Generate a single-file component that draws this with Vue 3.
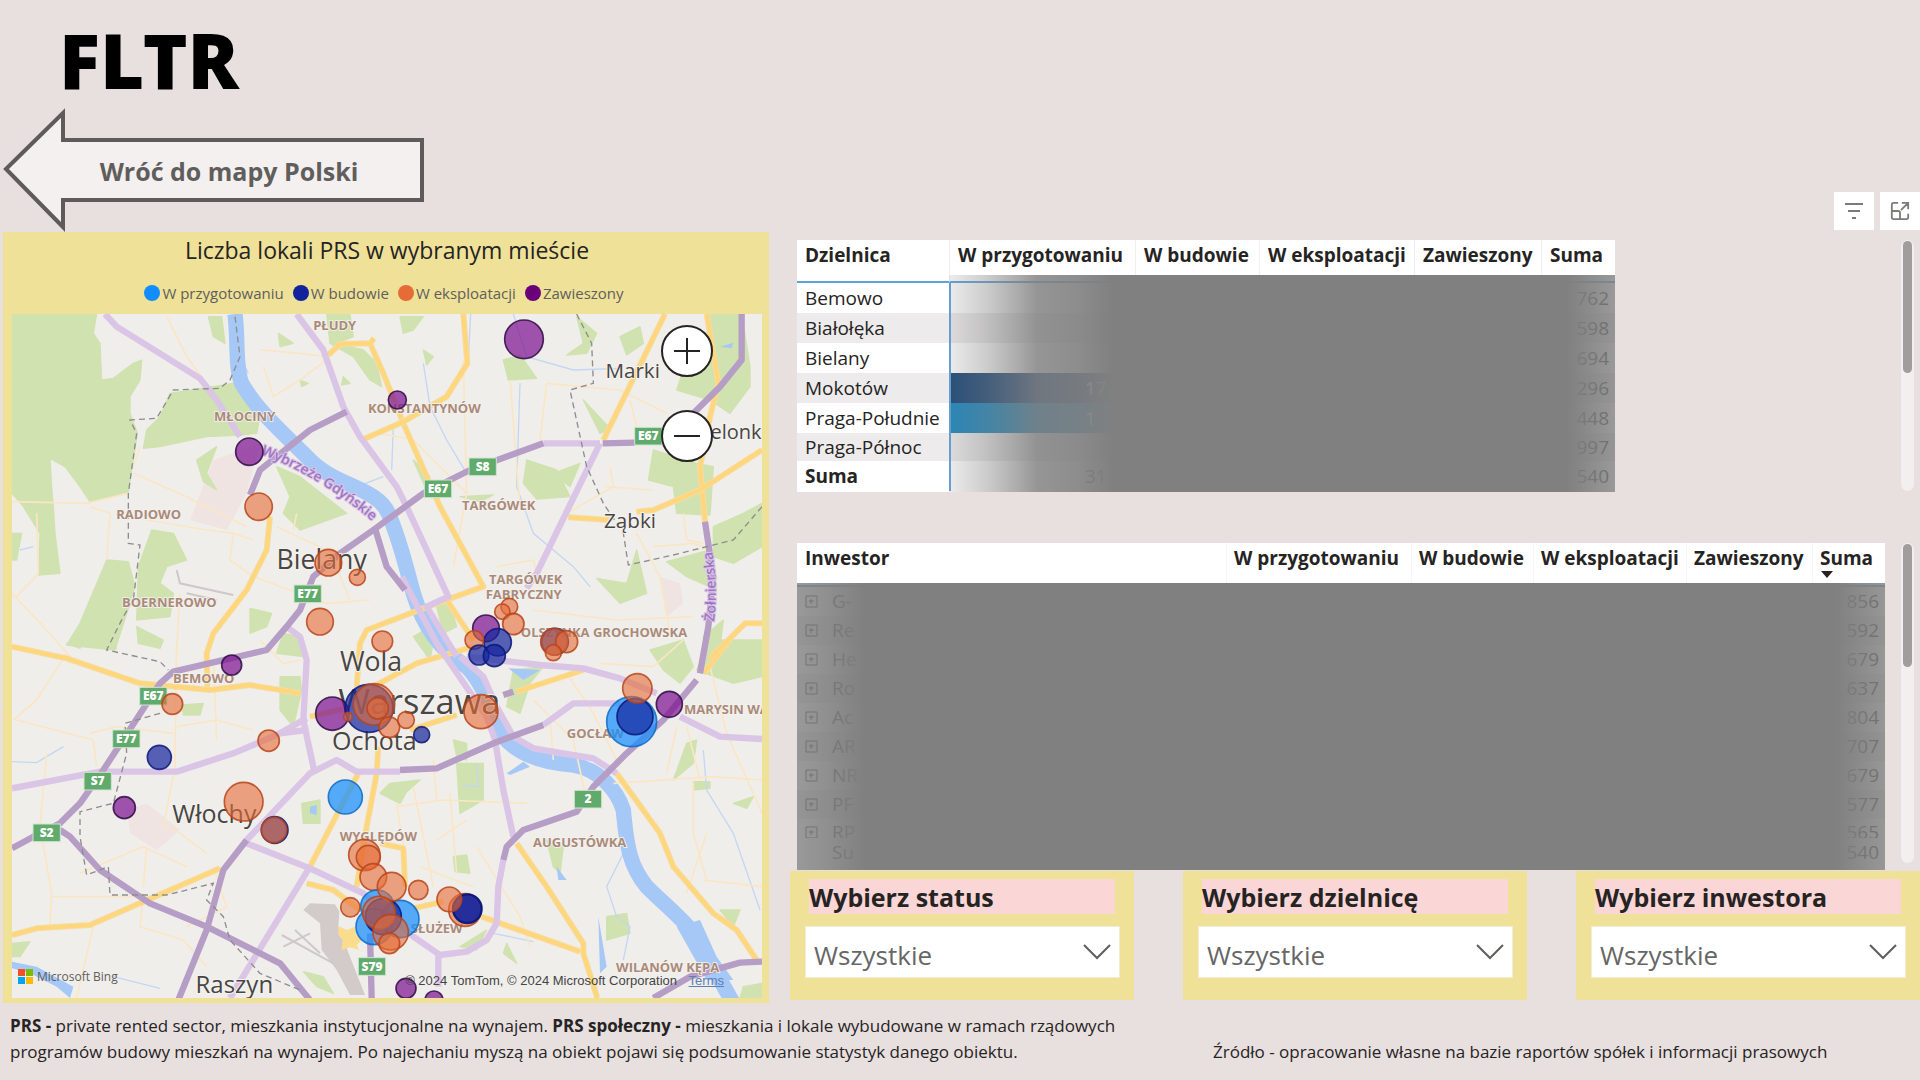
<script setup>
const legend = [
  { label: 'W przygotowaniu', color: '#118dff' },
  { label: 'W budowie', color: '#12239e' },
  { label: 'W eksploatacji', color: '#e66c37' },
  { label: 'Zawieszony', color: '#6b007b' },
]

const headers = ['W przygotowaniu', 'W budowie', 'W eksploatacji', 'Zawieszony', 'Suma']

const districts = [
  { name: 'Bemowo', value: '', sum: '762' },
  { name: 'Białołęka', value: '', sum: '598' },
  { name: 'Bielany', value: '', sum: '694' },
  { name: 'Mokotów', value: '17', sum: '296', fill: 'navy' },
  { name: 'Praga-Południe', value: '1', sum: '448', fill: 'azure' },
  { name: 'Praga-Północ', value: '', sum: '997' },
]

const investors = [
  { name: 'G-', sum: '856' },
  { name: 'Re', sum: '592' },
  { name: 'He', sum: '679' },
  { name: 'Ro', sum: '637' },
  { name: 'Ac', sum: '804' },
  { name: 'AR', sum: '707' },
  { name: 'NR', sum: '679' },
  { name: 'PF', sum: '577' },
  { name: 'RP', sum: '565' },
]

const slicers = [
  { id: 'status', label: 'Wybierz status' },
  { id: 'district', label: 'Wybierz dzielnicę' },
  { id: 'investor', label: 'Wybierz inwestora' },
]

// Map units: three per screen pixel at full width.
const greens = [
  'M36 42H290L280 100 300 130 305 240 340 235 400 190 425 180 420 240 390 290 390 340 412 400 385 575 270 605 240 560 195 500 150 475 155 560 160 620 165 700 180 820 115 825 120 700 70 620 36 580Z',
  'M36 700L65 700 50 780 36 780Z',
  'M510 280L700 250 735 310 780 350 770 400 720 405 620 410 480 440 430 445 440 390 480 350Z',
  'M455 690L520 700 560 780 500 800 480 850 520 880 510 950 410 960 415 800Z',
  'M320 780L385 785 405 860 380 940 345 1050 200 1035 240 970Z',
  'M830 500L900 530 1040 640 900 690 850 640 870 590Z',
  'M625 50H665L675 130 640 110Z',
  'M980 42H1050L1060 110 1010 130 1090 150 1130 190 1145 260 1110 240 1060 170 990 130Z',
  'M590 480L650 440 620 520 650 570 610 545Z',
  'M835 100L880 130 840 140ZM900 240L925 250 905 260ZM1030 230L1050 250 1025 255Z',
  'M750 925L815 940 800 980 750 1000ZM850 1000L900 1010 910 1070 830 1060Z',
  'M410 980L490 1020 480 1045 415 1030ZM200 1030L250 1020 240 1045ZM330 1020L350 1045 320 1040Z',
  'M1200 50H1270L1240 90 1210 100ZM1270 150L1300 170 1280 195Z',
  'M1510 180L1560 165 1610 235 1525 240Z',
  'M1730 50L1790 100 1760 160 1700 165 1750 130ZM1860 110L1920 80 1930 130 1880 165Z',
  'M1580 480L1670 510 1710 590 1610 597 1570 550ZM1660 520L1740 490 1710 560Z',
  'M2130 42H2225L2250 200 2250 260 2190 340 2130 300 2030 270 2050 210 2110 180Z',
  'M1960 450L2090 490 2140 500 2130 645 2030 640 2020 560 1945 540Z',
  'M2140 680L2230 640 2286 610V740L2200 790 2140 770Z',
  'M1790 835L1880 850 1910 750 1940 880 1860 910Z',
  'M2000 785L2130 750 2150 870 2060 830ZM2110 1010L2170 960 2160 1040Z',
  'M1240 480L1290 530 1275 560ZM1380 590L1480 585 1440 605ZM1750 300L1830 385 1800 400Z',
  'M1950 1050L2050 1020 2080 1100 2040 1150 1990 1110Z',
  'M2130 1020H2286V1130L2200 1150 2090 1110Z',
  'M1540 1110L1630 1100 1590 1150 1560 1240 1520 1220Z',
  'M1370 1390H1450L1450 1500 1380 1540Z',
  'M1140 1480L1170 1450 1260 1440 1220 1475 1200 1510Z',
  'M1820 1850L1880 1840 1890 1900 1820 1920ZM2080 1445H2130V1465L2080 1470Z',
  'M2060 1330L2090 1320 2080 1390 2020 1440ZM2200 1510L2260 1490 2240 1525Z',
  'M1640 1620L1690 1640 1680 1720 1660 1700ZM2160 1830H2220L2200 1880Z',
  'M545 1215L610 1210 600 1245 550 1245ZM840 1130H900L905 1170 880 1280 840 1230Z',
  'M905 1510L960 1500V1570L910 1570ZM36 1930L90 1925 60 1970 36 1970Z',
  'M1360 1670L1400 1665 1410 1720 1365 1715ZM1380 1940L1460 1890 1430 1950Z',
  'M1520 1930L1550 1990 1510 1960ZM2230 2060L2286 2050V2094H2220Z',
  'M1310 920L1350 910 1370 980 1330 1000ZM1240 1010L1310 970 1290 1080Z',
  'M910 2015L970 2030 1000 2080 950 2060ZM1360 1320L1400 1330 1400 1380 1370 1370Z',
]
const blush = [
  'M640 480L780 430 740 580 680 690 570 660Z',
  'M380 1530L440 1510 540 1590 470 1650 390 1600Z',
  'M1980 830L2040 850 2050 910 2000 950Z',
]
const runways = ['M845 1905L1000 1990', 'M850 1940L930 1900', 'M885 1890L960 1960', 'M530 810L540 850 700 885', 'M560 880L650 900']
const river = 'M705 42C715 120 705 200 725 250C770 330 850 400 920 470C1000 560 1130 560 1165 640C1200 720 1215 790 1240 880C1270 980 1320 1050 1400 1100C1450 1150 1480 1240 1510 1310C1560 1370 1650 1390 1720 1395C1800 1410 1850 1470 1870 1530C1880 1640 1890 1700 1940 1760C2010 1830 2080 1880 2110 1950L2200 2110'
const lakes = [
  'M1520 1420L1570 1385 1590 1400 1530 1425Z', 'M1525 1105L1620 1110 1570 1140Z',
  'M1795 1850L1820 2000 1800 2020Z', 'M36 1985L110 2000 220 2060 210 2094 170 2060 90 2020 36 2005Z',
  'M1670 1700L1700 1740 1675 1740Z', 'M2160 140L2200 128 2195 145Z', 'M930 1520L950 1515V1545L930 1540Z',
  'M2030 1880L2100 1860 2150 1970 2200 2040 2120 2040Z',
]
const streams = [
  'M1270 190L1290 320 1340 420 1400 520', 'M1412 42L1405 180', 'M1180 380L1175 510', 'M990 520L1070 560 1150 530',
  'M720 170L745 220', 'M1540 42L1580 170 1720 210 1860 205', 'M1560 250L1550 560 1600 700 1720 800 1770 860',
  'M36 1385L110 1388 190 1340', 'M1870 1660L1820 1760 1850 1850 1890 1880 1870 1980', 'M2110 1350L2120 1470 2200 1600 2280 1830',
  'M340 2030L480 2065', 'M780 360L850 420', 'M1430 1390L1435 1460 1390 1455', 'M60 750L100 740', 'M1480 1900L1600 1925',
]
const minor = [
  'M500 50L560 170 640 280', 'M780 150L900 160 980 170', 'M790 200L820 290 900 240 980 180', 'M36 605L260 610 385 580',
  'M270 620L330 640 320 780', 'M400 520L560 590 740 680', 'M440 660L620 690 700 700 760 720', 'M700 700L690 780 760 830 980 910 1110 900',
  'M400 500L420 440', 'M110 640L115 820 50 890', 'M36 880L130 980 220 1080', 'M540 880L530 1060', 'M830 680L1000 760',
  'M890 640L880 690', 'M1000 780L1050 900', 'M1390 180L1400 580 1360 800', 'M1530 240L1560 620', 'M1640 250L1620 420',
  'M1640 250L1860 270 2000 340', 'M1890 300L1920 420', 'M1820 560L1960 570', 'M1830 500L1840 560 1700 640', 'M1960 740L2080 730 2130 750',
  'M1910 700L1980 830 2010 1000', 'M2050 640L2060 720 2110 730', 'M1140 400L1240 420 1400 580', 'M1490 800L1600 780 1620 860',
  'M1600 930L1850 960 2080 950', 'M2050 1020L1960 1100 1800 1090', 'M200 1060L110 1200 40 1260', 'M50 1260L280 1320 290 1400',
  'M270 1300L350 1280 520 1300', 'M530 1020L525 1400 490 1580', 'M640 1080L650 1320', 'M530 1280L650 1260 760 1290',
  'M140 1360L120 1580 155 1780 150 1880', 'M155 1790L440 1790', 'M430 1780L420 1880 550 1920 620 2000', 'M440 1640L430 1760',
  'M240 1720L430 1640 560 1700', 'M500 1570L620 1660', 'M280 1880L230 2094', 'M560 1880L680 1820 640 1700',
  'M1190 1520L1330 1500 1580 1510', 'M1190 1510L1220 1700', 'M1350 1480L1370 1720', 'M1240 1460L1300 1760', 'M1430 1640L1560 1850 1590 1940',
  'M1310 1620L1400 1560', 'M1260 1700L1420 1760', 'M1650 1260L1660 1380', 'M1700 1120L1780 1240 1860 1400', 'M1840 1450L2140 1430 2286 1440',
  'M2080 1440L2080 1600 2120 1740', 'M2130 1100L2180 1300 2286 1540', 'M2110 1740L2286 1760', 'M1600 1200L1720 1320 1760 1500',
  'M780 1020L850 1090 900 1080', 'M1300 1380L1310 1500', 'M2060 1280L2100 1440', 'M2120 1600L2060 1780', 'M2030 1280L2000 1420',
]
const yellow = [
  'M985 165L1020 132 1110 130 1150 220 1210 370 1320 620 1450 860 1310 910 1100 990 1080 1030 1070 1160',
  'M1110 130L1122 115',
  'M1390 42L1402 190 1340 290 1210 365 1090 418',
  'M1995 42L1810 420', 'M2120 42L2155 250 2130 350 2100 500 2115 665',
  'M2286 450L2100 570 1960 630 1910 635', 'M1705 652L1830 660',
  'M810 650L800 750 740 870 640 1000 620 1060 622 1160',
  'M36 1040L200 1075 420 1150 630 1170 750 1155 900 1180',
  'M36 1905L110 1885 270 1875 430 1805 660 1705',
  'M1075 1420L930 1700', 'M1135 1340L1130 1420 1100 1580 1070 1760', 'M920 1750L1000 1770 1080 1830',
  'M930 1250L1060 1220M1120 1160L1250 1090 1420 1040', 'M1550 1175L1750 1110', 'M1230 1290L1370 1245',
  'M1850 1420L1980 1600 2020 1700 2140 1840 2210 1890 2270 1980',
  'M1550 1630L1640 1760 1750 1930 1750 1960 1792 2094',
  'M1445 1850L1740 1955', 'M1240 1825L1330 1805', 'M1140 1630L1210 1645 1215 1760',
  'M2190 1020L2110 1120', 'M2286 970H2235L2130 1075', 'M1340 900L1420 1020',
]
const lilac = [
  'M315 42L350 80 600 235 650 300 720 410', 'M890 42L970 150 1030 320 1080 410 1190 560 1220 620 1345 890 1280 920 1370 1070',
  'M1205 830L1310 1030 1460 1250 1485 1320 1510 1470 1540 1610', 'M1800 430L1610 820 1580 865', 'M1630 430H1800',
  'M860 980L900 1010 920 1080 910 1260 942 1410', 'M36 1465L300 1415 530 1415 700 1360 830 1305 920 1255M840 1300L920 1290',
  'M740 1620L930 1420 1010 1380 1070 1415 1200 1415', 'M740 1630L930 1705 1090 1780 1240 1910 1320 1965 1400 1955 1460 1920 1490 1870 1495 1760 1510 1680',
  'M930 1700L690 2094', 'M1400 1070L1620 1095 1750 1105 1860 1135 1970 1180', 'M1380 1070L1450 1130 1490 1220 1540 1310 1600 1345 1780 1375 1850 1420',
  'M1630 1275L1720 1210 1860 1210', 'M2040 1250L2160 1310 2286 1317', 'M1315 1960V2060',
]
const violet = [
  'M1040 335L930 390 780 510 750 585', 'M1630 430L1410 510 1270 580 1120 690 1020 760 940 830 900 930 860 980 800 1050 520 1115 480 1150 310 1410 240 1510 180 1570 100 1610 36 1645',
  'M1125 685L1160 800 1215 870', 'M1808 430L1905 428M2000 420L2160 260 2225 180V42',
  'M2115 665L2140 830 2125 980 2100 1120', 'M2090 1140L1990 1260 1880 1360 1780 1460 1730 1535 1570 1590 1520 1640 1510 1680',
  'M1510 1185L1540 1175', 'M1630 1275L1480 1330 1310 1405 1200 1410', 'M180 1590L210 1610 300 1710 450 1810 620 1880 840 1990 930 2100',
  'M740 1620L670 1710 620 1890 535 2100', 'M1110 1900L1115 2094', 'M1960 2094L2070 2030 2220 1988 2286 1985',
]
const borders = [
  'M705 50L720 170 690 240 660 265 520 270 470 355 390 360 410 400 385 580V730L420 735 400 900 370 950 320 1050 480 1085 505 1110',
  'M1730 42L1775 130 1780 250 1710 270 1760 500 1810 610 1870 700 1885 795 2020 765 2200 720 2286 620',
  'M480 1240L375 1270 380 1360 340 1510 240 1535V1610L260 1725 325 1700 330 1785H500L640 1750 620 1800 670 1850 690 1920 780 2020 900 2070',
]
const shields = [
  ['E77', 882, 855], ['E67', 1904, 382], ['S8', 1407, 474], ['E67', 1273, 540], ['E67', 419, 1162],
  ['E77', 338, 1290], ['S7', 252, 1417], ['S2', 99, 1572], ['2', 1723, 1471], ['S79', 1075, 1973],
]
const areas = [
  ['PŁUDY', 1004, 91], ['MŁOCINY', 734, 364], ['KONSTANTYNÓW', 1273, 338], ['RADIOWO', 446, 656], ['BOERNEROWO', 508, 922],
  ['TARGÓWEK', 1496, 630], ['TARGÓWEK', 1577, 853], ['FABRYCZNY', 1571, 898], ['OLSZYNKA GROCHOWSKA', 1812, 1012],
  ['BEMOWO', 611, 1150], ['GOCŁAW', 1786, 1314], ['MARYSIN WAWERSKI', 2252, 1242], ['AUGUSTÓWKA', 1739, 1642],
  ['WYGLĘDÓW', 1135, 1624], ['SŁUŻEW', 1310, 1898], ['WILANÓW KĘPA', 2003, 2016],
]
const towns = [
  ['Bielany', 965, 808, 80], ['Wola', 1113, 1112, 80], ['Warszawa', 1258, 1242, 103], ['Ochota', 1123, 1350, 75], ['Włochy', 643, 1570, 75],
  ['Raszyn', 703, 2080, 72], ['Marki', 1898, 234, 62], ['Ząbki', 1890, 683, 62], ['Zielonka', 2200, 418, 60],
]
const bubbles = [
  ['z', 748, 455, 41], ['e', 776, 620, 41], ['e', 985, 788, 40], ['e', 1072, 832, 24], ['e', 960, 965, 40], ['e', 1147, 1024, 31],
  ['z', 695, 1095, 30], ['z', 1572, 118, 58], ['z', 1192, 300, 27], ['e', 1528, 920, 25], ['e', 1507, 935, 23], ['e', 1540, 972, 32],
  ['z', 1458, 985, 40], ['b', 1493, 1027, 41], ['e', 1423, 1020, 28], ['b', 1437, 1065, 30], ['b', 1483, 1067, 33],
  ['b', 1665, 1025, 40], ['e', 1662, 1025, 40], ['e', 1700, 1025, 33], ['e', 1660, 1058, 24],
  ['e', 517, 1212, 31], ['b', 478, 1372, 36], ['z', 373, 1523, 33], ['e', 806, 1322, 32], ['e', 731, 1505, 58],
  ['b', 824, 1590, 40], ['e', 822, 1590, 38], ['z', 997, 1241, 50], ['b', 1107, 1225, 72], ['e', 1122, 1213, 62],
  ['e', 1133, 1225, 32], ['e', 1044, 1250, 13], ['e', 1168, 1282, 31], ['p', 1036, 1491, 51], ['e', 1093, 1665, 47],
  ['e', 1105, 1672, 36], ['e', 1120, 1731, 40], ['p', 1132, 1820, 50],
  ['p', 1122, 1880, 54], ['p', 1201, 1857, 56], ['b', 1150, 1850, 54], ['e', 1175, 1760, 43], ['e', 1051, 1822, 29],
  ['e', 1137, 1838, 49], ['e', 1172, 1897, 53],
  ['e', 1168, 1930, 31], ['e', 1443, 1235, 51], ['e', 1218, 1260, 25], ['b', 1265, 1304, 24], ['p', 1895, 1265, 75],
  ['b', 1905, 1250, 54], ['e', 1912, 1165, 44], ['z', 2008, 1213, 39], ['e', 1255, 1770, 29], ['e', 1395, 1830, 49],
  ['b', 1402, 1826, 44], ['b', 1402, 1826, 42], ['e', 1348, 1798, 37], ['z', 1218, 2065, 30], ['z', 1302, 2100, 27],
]
</script>

<template>
  <div class="page">
    <main class="board">
      <section class="left">
        <h1 class="logo">FLTR</h1>
        <button class="back" type="button">
          <svg class="back-shape" viewBox="0 0 424 124" aria-hidden="true">
            <path d="M3 61L60 5V32H419V92H60V119Z" />
          </svg>
          <span class="back-text">Wróć do mapy Polski</span>
        </button>

        <div class="map-card">
          <h2 class="map-title">Liczba lokali PRS w wybranym mieście</h2>
          <ul class="legend">
            <li v-for="item in legend" :key="item.label">
              <svg viewBox="0 0 16 16" aria-hidden="true"><circle cx="8" cy="8" r="8" :fill="item.color" /></svg>
              {{ item.label }}
            </li>
          </ul>
          <div class="map">
            <svg class="map-svg" viewBox="36 42 2250 2052" role="img" aria-label="Warszawa">
              <rect x="36" y="42" width="2250" height="2052" fill="#f0eeeb" />
              <path v-for="d in blush" :key="d" :d="d" fill="#f0e4e3" />
              <path v-for="d in greens" :key="d" :d="d" class="green" />
              <path d="M910 1830L930 1810 1005 1813 1018 1835 1015 1880 1050 1970 1095 2085 1050 2085 1010 2010 965 1950 960 1870Z" fill="#d3cbca" />
              <path v-for="d in runways" :key="d" :d="d" class="runway" />
              <path d="M1015 1878L1040 1890 1065 1880 1068 1905 1085 1920 1070 1935 1078 1950 1050 1942 1025 1950 1028 1920 1015 1905Z" fill="#fbdc8c" />
              <path v-for="d in streams" :key="d" :d="d" class="stream" />
              <path :d="river" class="river" />
              <path v-for="d in lakes" :key="d" :d="d" fill="#a6c8f6" />
              <path v-for="d in minor" :key="d" :d="d" class="minor" />
              <g v-for="d in yellow" :key="d">
                <path :d="d" class="yellow-edge" />
                <path :d="d" class="yellow" />
              </g>
              <path v-for="d in lilac" :key="d" :d="d" class="lilac" />
              <path v-for="d in violet" :key="d" :d="d" class="violet" />
              <path v-for="d in borders" :key="d" :d="d" class="border" />
              <g v-for="(s, i) in shields" :key="i">
                <rect :x="s[1]" :y="s[2]" width="82" height="53" class="shield" />
                <text :x="s[1] + 41" :y="s[2] + 39" class="shield-text">{{ s[0] }}</text>
              </g>
              <text v-for="(a, i) in areas" :key="i" :x="a[1]" :y="a[2]" class="area">{{ a[0] }}</text>
              <path id="quay" d="M782 462Q960 530 1122 668" fill="none" />
              <text class="street"><textPath href="#quay">Wybrzeże Gdyńskie</textPath></text>
              <path id="soldier" d="M2142 965Q2156 860 2134 740" fill="none" />
              <text class="street"><textPath href="#soldier">Żołnierska</textPath></text>
              <text v-for="t in towns" :key="t[0]" :x="t[1]" :y="t[2]" :font-size="t[3]" class="town">{{ t[0] }}</text>
              <circle v-for="(b, i) in bubbles" :key="i" :cx="b[1]" :cy="b[2]" :r="b[3]" class="bubble" :class="b[0]" />
            </svg>
            <div class="zoom">
              <button type="button" aria-label="Powiększ">
                <svg viewBox="0 0 52 52" aria-hidden="true"><circle cx="26" cy="26" r="25" /><path d="M13 26H39M26 13V39" /></svg>
              </button>
              <button type="button" aria-label="Pomniejsz">
                <svg viewBox="0 0 52 52" aria-hidden="true"><circle cx="26" cy="26" r="25" /><path d="M13 26H39" /></svg>
              </button>
            </div>
            <div class="bing">
              <svg viewBox="0 0 16 16" aria-hidden="true">
                <path d="M0 0H7V7H0Z" fill="#f25022" /><path d="M8 0H15V7H8Z" fill="#7fba00" />
                <path d="M0 8H7V15H0Z" fill="#00a4ef" /><path d="M8 8H15V15H8Z" fill="#ffb900" />
              </svg>
              <span>Microsoft Bing</span>
            </div>
            <p class="credits">© 2024 TomTom, © 2024 Microsoft Corporation <a href="#terms">Terms</a></p>
          </div>
        </div>
      </section>

      <section class="right">
        <div class="tools">
          <button type="button" aria-label="Filtry">
            <svg viewBox="0 0 20 20" aria-hidden="true"><path d="M1 3H19M4 10H16M8 17H12" /></svg>
          </button>
          <button type="button" aria-label="Tryb koncentracji uwagi">
            <svg viewBox="0 0 22 22" aria-hidden="true">
              <path d="M9 2H4Q2 2 2 4V18Q2 20 4 20H18Q20 20 20 18V14M2 11H9Q11 11 11 13V20M13 2H20V9M20 2L12 10" />
            </svg>
          </button>
        </div>

        <div class="block districts">
          <div class="sheet">
            <table>
              <colgroup><col class="d0" /><col class="d1" /><col class="d2" /><col class="d3" /><col class="d4" /><col /></colgroup>
              <thead>
                <tr><th scope="col">Dzielnica</th><th v-for="h in headers" :key="h" scope="col">{{ h }}</th></tr>
              </thead>
              <tbody>
                <tr v-for="row in districts" :key="row.name">
                  <td>{{ row.name }}</td>
                  <td class="first" :class="row.fill"><span>{{ row.value }}</span></td>
                  <td></td><td></td><td></td>
                  <td class="num">{{ row.sum }}</td>
                </tr>
              </tbody>
              <tfoot>
                <tr><th scope="row">Suma</th><td class="first"><span>31</span></td><td></td><td></td><td></td><td class="num">540</td></tr>
              </tfoot>
            </table>
            <div class="veil"></div>
          </div>
          <div class="track"><div class="thumb"></div></div>
        </div>

        <div class="block investors">
          <div class="sheet">
            <table>
              <colgroup><col /><col class="i1" /><col class="i2" /><col class="i3" /><col class="i4" /><col class="i5" /></colgroup>
              <thead>
                <tr>
                  <th scope="col">Inwestor</th>
                  <th v-for="h in headers" :key="h" scope="col">
                    {{ h }}<svg v-if="h === 'Suma'" class="sort" viewBox="0 0 12 7" aria-hidden="true"><path d="M0 0H12L6 7Z" /></svg>
                  </th>
                </tr>
              </thead>
              <tbody>
                <tr v-for="row in investors" :key="row.name">
                  <td>
                    <div class="name">
                      <svg viewBox="0 0 13 13" aria-hidden="true"><path d="M1 1H12V12H1ZM4 6H9M6 4V9" /></svg>{{ row.name }}
                    </div>
                  </td>
                  <td></td><td></td><td></td><td></td>
                  <td class="num"><div class="cut">{{ row.sum }}</div></td>
                </tr>
              </tbody>
              <tfoot>
                <tr><td class="total">Su</td><td></td><td></td><td></td><td></td><td class="num">540</td></tr>
              </tfoot>
            </table>
            <div class="veil"></div>
          </div>
          <div class="track"><div class="thumb"></div></div>
        </div>

        <div class="slicers">
          <div v-for="s in slicers" :key="s.id" class="slicer">
            <label :for="s.id">{{ s.label }}</label>
            <div class="pick">
              <select :id="s.id"><option>Wszystkie</option></select>
              <svg viewBox="0 0 28 16" aria-hidden="true"><path d="M1 1L14 14 27 1" /></svg>
            </div>
          </div>
        </div>
      </section>
    </main>

    <footer class="foot">
      <p><b>PRS -</b> private rented sector, mieszkania instytucjonalne na wynajem. <b>PRS społeczny -</b> mieszkania i lokale wybudowane w ramach rządowych<br />programów budowy mieszkań na wynajem. Po najechaniu myszą na obiekt pojawi się podsumowanie statystyk danego obiektu.</p>
      <p class="source">Źródło - opracowanie własne na bazie raportów spółek i informacji prasowych</p>
    </footer>
  </div>
</template>

<style>
body { margin: 0; background: #e8dfdf; }
</style>

<style scoped>
.page { font-family: "Open Sans", "Noto Sans", sans-serif; color: #252423; background: #e8dfdf; }
.page * { box-sizing: border-box; }
button { padding: 0; border: 0; background: none; font: inherit; color: inherit; cursor: pointer; }
svg { display: block; }
.board { display: grid; grid-template-columns: 790fr 1130fr; }
.left { padding: 0 21px 0 3px; min-width: 0; }
.right { padding-top: 192px; min-width: 0; }

.logo { margin: 0; padding: 20px 0 0 56px; height: 108px; font: 900 76px/80px "Noto Sans", sans-serif; color: #000; }
.back { display: block; position: relative; width: 424px; height: 124px; }
.back-shape { width: 100%; fill: #f4f0f0; stroke: #5f5b5b; stroke-width: 4; }
.back-text { position: absolute; inset: 0; padding-left: 28px; font-size: 25px; font-weight: 700; line-height: 126px; text-align: center; color: #605e5c; }

.map-card { background: #efe198; padding: 0 7px 5px 9px; }
.map-title { margin: 0; height: 40px; font-size: 23px; font-weight: 400; line-height: 36px; text-align: center; }
.legend { display: flex; justify-content: center; gap: 9px; height: 42px; margin: 0; padding: 0 6px 0 0; list-style: none; font-size: 15px; line-height: 44px; color: #605e5c; }
.legend li { display: flex; align-items: center; gap: 2px; }
.legend svg { width: 16px; height: 16px; }

.map { position: relative; overflow: hidden; }
.map-svg { width: 100%; height: auto; }
.green { fill: #d0e2b0; stroke: #d0e2b0; stroke-width: 4; stroke-linejoin: round; }
.runway { fill: none; stroke: #cfc8c9; stroke-width: 6; }
.stream { fill: none; stroke: #c3d7f2; stroke-width: 4; }
.river { fill: none; stroke: #a6c8f6; stroke-width: 46; stroke-linejoin: round; }
.minor { fill: none; stroke: #fae6c4; stroke-width: 5; stroke-linejoin: round; }
.yellow-edge { fill: none; stroke: #f5dca0; stroke-width: 18; stroke-linejoin: round; }
.yellow { fill: none; stroke: #ffd67c; stroke-width: 12; stroke-linejoin: round; }
.lilac { fill: none; stroke: #dac5e6; stroke-width: 19; stroke-linejoin: round; }
.violet { fill: none; stroke: #b59dc6; stroke-width: 19; stroke-linejoin: round; }
.border { fill: none; stroke: #8d8d8d; stroke-width: 4; stroke-dasharray: 18 12; }
.shield { fill: #60aa6c; stroke: #cfe5d0; stroke-width: 3; }
.shield-text { font-size: 36px; font-weight: 800; fill: #fff; text-anchor: middle; }
.area { font-size: 39px; font-weight: 700; fill: #a98a7a; text-anchor: middle; paint-order: stroke; stroke: #f5f2ee; stroke-width: 5; }
.street { font-size: 42px; font-weight: 600; fill: #9f75c4; paint-order: stroke; stroke: #dac5e6; stroke-width: 6; }
.town { fill: #484644; text-anchor: middle; paint-order: stroke; stroke: #f5f2ee; stroke-width: 6; }
.bubble { stroke-width: 5; fill-opacity: 0.7; stroke-opacity: 0.85; }
.p { fill: #118dff; stroke: #0d6cc4; }
.b { fill: #12239e; stroke: #0c1877; }
.e { fill: #e66c37; stroke: #b8441a; fill-opacity: 0.6; }
.z { fill: #7b1090; stroke: #2e0a45; }

.zoom { position: absolute; top: 11px; right: 49px; display: flex; flex-direction: column; gap: 33px; }
.zoom svg { width: 52px; height: 52px; fill: #fff; stroke: #252423; stroke-width: 2; }
.bing { position: absolute; left: 6px; bottom: 13px; display: flex; align-items: center; gap: 3px; font-size: 12px; line-height: 16px; color: #605e5c; }
.bing svg { width: 16px; height: 16px; }
.credits { position: absolute; right: 38px; bottom: 9px; margin: 0; font: 13px/16px "Liberation Sans", sans-serif; color: #444; white-space: nowrap; }
.credits a { margin-left: 8px; color: #5b7fb5; }

.tools { display: flex; justify-content: flex-end; gap: 6px; }
.tools button { display: grid; place-items: center; width: 40px; height: 38px; background: #fff; }
.tools svg { width: 20px; height: 20px; fill: none; stroke: #7d7b79; stroke-width: 2; }

.block { display: flex; justify-content: space-between; padding-left: 7px; }
.districts { margin-top: 10px; height: 252px; padding-right: 6px; }
.investors { margin-top: 51px; height: 327px; padding-right: 6px; }
.sheet { position: relative; background: #fff; }
.districts .sheet { width: 818px; }
.investors .sheet { flex: 1; margin-right: 16px; }
table { width: 100%; border-collapse: separate; border-spacing: 0; table-layout: fixed; font-size: 19px; }
th, td { padding: 0 0 0 8px; text-align: left; white-space: nowrap; }
th { font-weight: 700; }
thead th { border-left: 1px solid #f0eeee; vertical-align: top; }
thead th:first-child { border-left: 0; }
.districts thead th { height: 43px; line-height: 31px; border-bottom: 2px solid #5fa3dd; }
.districts td, .districts tfoot th { height: 30px; line-height: 30px; }
.districts tbody tr:nth-child(even) { background: #edebec; }
.districts tbody tr:last-child td { height: 28px; line-height: 28px; }
.first { border-left: 2px solid #5fa3dd; color: #fff; }
.first span { display: block; padding-left: 126px; }
.districts tfoot .first { color: #333; }
.navy { background: #1b4778; }
.azure { background: #1b87be; }
.d0 { width: 152px; } .d1 { width: 186px; } .d2 { width: 124px; } .d3 { width: 155px; } .d4 { width: 127px; }
.num { padding-right: 6px; text-align: right; }

.veil { position: absolute; right: 0; bottom: 0; }
.districts .veil { top: 35px; left: 152px; background: linear-gradient(90deg, rgba(128, 128, 128, 0.15) 0, rgba(128, 128, 128, 0.4) 38px, rgba(128, 128, 128, 0.65) 68px, rgba(128, 128, 128, 0.83) 88px, rgba(128, 128, 128, 0.9) 130px, #808080 164px, #808080 calc(100% - 48px), rgba(128, 128, 128, 0.8) 100%); }
.investors .veil { top: 40px; left: 0; background: linear-gradient(90deg, rgba(128, 128, 128, 0.8) 0, rgba(128, 128, 128, 0.88) 30px, #808080 68px, #808080 calc(100% - 50px), rgba(128, 128, 128, 0.82) 100%); }

.i1 { width: 185px; } .i2 { width: 122px; } .i3 { width: 153px; } .i4 { width: 126px; } .i5 { width: 73px; }
.investors thead th { position: relative; height: 44px; line-height: 31px; border-color: #f8f6f6; border-bottom: 2px solid #5fa3dd; }
.investors thead th + th { padding-left: 7px; }
.investors td { height: 29px; line-height: 29px; }
.investors tbody tr:nth-child(even) { background: #edebec; }
.investors tbody tr:last-child td { height: 19px; line-height: 27px; vertical-align: top; }
.investors tbody tr:last-child .name, .investors tbody tr:last-child .cut { height: 19px; overflow: hidden; align-items: flex-start; }
.investors tbody tr:last-child svg { margin-top: 7px; }
.name { display: flex; align-items: center; gap: 14px; }
.name svg { width: 13px; height: 13px; fill: none; stroke: #333; stroke-width: 1; }
.investors .total { padding-left: 35px; }
.sort { position: absolute; left: 8px; top: 28px; width: 12px; height: 7px; fill: #252423; }

.track { width: 13px; height: 251px; border-radius: 7px; background: #f3efef; }
.investors .track { height: 320px; }
.thumb { width: 9px; height: 132px; margin: 1px 2px; border-radius: 5px; background: #a09d9c; }
.investors .thumb { height: 123px; }

.slicers { display: grid; grid-template-columns: repeat(3, 1fr); gap: 49px; margin-top: 1px; }
.slicer { padding: 8px 14px 22px 15px; background: #efe198; }
.slicer label { display: block; height: 35px; margin: 0 5px 12px 4px; background: #fbd6d7; font-size: 25px; font-weight: 700; line-height: 37px; }
.pick { position: relative; }
.pick select { width: 100%; height: 52px; padding: 6px 8px 2px; border: 1px solid #f3ecd0; border-radius: 0; background: #fff; appearance: none; font: 26px/44px "Open Sans", "Noto Sans", sans-serif; color: #666; }
.pick svg { position: absolute; right: 9px; top: 18px; width: 28px; height: 16px; fill: none; stroke: #605e5c; stroke-width: 2; pointer-events: none; }

.foot { display: grid; grid-template-columns: 1213fr 707fr; padding-top: 10px; font-size: 17px; line-height: 26px; white-space: nowrap; }
.foot p { margin: 0; padding-left: 10px; }
.foot .source { align-self: end; padding-left: 0; }
</style>
